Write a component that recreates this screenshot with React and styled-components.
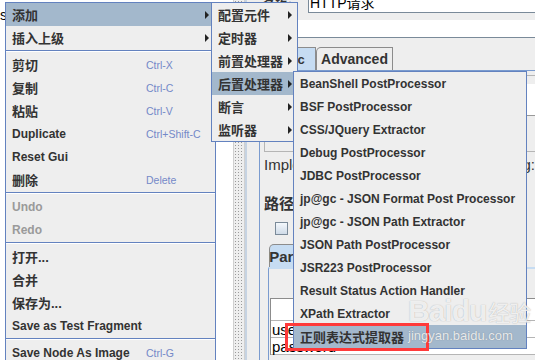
import React from 'react'
import styled, { createGlobalStyle } from 'styled-components'

const UI_FONT = `"Liberation Sans", "Noto Sans CJK SC", sans-serif`
const HAS_CJK = /[\u4e00-\u9fff]/

const GlobalStyle = createGlobalStyle`
  html, body {
    margin: 0;
    padding: 0;
    background: #eeeeee;
  }
  body {
    font-family: ${UI_FONT};
    font-size: 12px;
    color: #333333;
  }
`

const Screen = styled.div`
  position: relative;
  width: 535px;
  height: 360px;
  overflow: hidden;
  display: flex;
  background: #eeeeee;
`

/* ---------- the JMeter window behind the popup ---------- */

const Tree = styled.div`
  flex: none;
  width: 233px;
  background: #ffffff;
  display: flex;
  flex-direction: column;
`

const TreeRow = styled.div`
  height: ${p => p.$h || 18}px;
  line-height: 18px;
  padding-left: ${p => p.$indent || 0}px;
  white-space: nowrap;
  color: #000;
  font-size: 14px;
`

const Splitter = styled.div`
  flex: none;
  width: 10px;
  background-color: #eeeeee;
  background-image: radial-gradient(#9a9a9a 0.7px, transparent 1px);
  background-size: 3px 3px;
  border-left: 1px solid #d0d0d0;
  border-right: 1px solid #d0d0d0;
`

const Editor = styled.div`
  flex: 1;
  min-width: 0;
  display: flex;
  flex-direction: column;
  padding-left: 12px;
  border-left: 2px solid #c6d3e2;
`

const FieldRow = styled.div`
  display: flex;
  align-items: flex-end;
  margin-top: ${p => p.$top || 0}px;
  height: ${p => p.$h}px;
`

const FieldLabel = styled.div`
  flex: none;
  width: ${p => p.$w}px;
  font-weight: bold;
  padding-left: 4px;
`

const TextField = styled.div`
  flex: 1;
  height: 100%;
  box-sizing: border-box;
  background: #ffffff;
  border-left: ${p => (p.$flat ? 'none' : '1px solid #7a8a99')};
  border-bottom: 1px solid #7a8a99;
  font-size: 14px;
  color: #000;
  padding: 0 0 2px 1px;
  display: flex;
  align-items: flex-end;
  line-height: 14px;
  white-space: nowrap;
`

const TabStrip = styled.div`
  display: flex;
  height: 23px;
  margin-top: ${p => p.$top || 0}px;
  margin-left: ${p => p.$left || 0}px;
`

const Tab = styled.div`
  flex: none;
  width: ${p => p.$w}px;
  display: flex;
  align-items: center;
  justify-content: center;
  font-weight: bold;
  font-size: ${p => p.$size || 13}px;
  color: #333;
  border: 1px solid #8c8c8c;
  border-bottom: none;
  background: ${p => (p.$selected ? '#c6dcf2' : '#eeeeee')};
  border-top-left-radius: 5px;
`

const TabPanel = styled.div`
  flex: 1;
  border-top: 1px solid #7a9bcf;
  border-left: 1px solid #7a9bcf;
  display: flex;
  flex-direction: column;
`

const GroupBox = styled.div`
  height: 67px;
  margin: 4px 0 0 4px;
  border: 1px solid #b5b5b5;
  border-right: none;
  display: flex;
  align-items: flex-start;
  padding-top: 8px;
`

const Blank = styled.div`
  margin-left: auto;
  width: 120px;
  height: 31px;
  background: #ffffff;
  border-bottom: 1px solid #999;
`

const FormRow = styled.div`
  height: 22px;
  margin-top: ${p => p.$top || 0}px;
  display: flex;
  align-items: center;
  padding-left: 4px;
  gap: 6px;
  white-space: nowrap;
  color: #333;
  font-weight: ${p => (p.$bold ? 'bold' : 'normal')};
  font-size: 15px;
`

const Spacer = styled.div`
  flex: 1;
`

const CheckBox = styled.span`
  flex: none;
  width: 11px;
  height: 11px;
  margin-left: 11px;
  border: 1px solid #7a8a99;
  background: linear-gradient(#f4f8fc, #cfdbe8);
`

const ParamPanel = styled.div`
  flex: 1;
  margin-left: 8px;
  border-top: 2px solid #c6dcf2;
  border-left: 1px solid #7a9bcf;
  display: flex;
  flex-direction: column;
  padding-top: 29px;
`

const Table = styled.div`
  margin-left: 1px;
  border-top: 1px solid #8c8c8c;
  border-left: 1px solid #8c8c8c;
  background: #ffffff;
  display: flex;
  flex-direction: column;
`

const TableRow = styled.div`
  height: ${p => p.$h || 16}px;
  border-bottom: 1px solid #b5b5b5;
  display: flex;
  align-items: center;
  padding-left: 1px;
  font-size: 15px;
  color: #000;
`

/* ---------- popup menus ---------- */

const Popup = styled.div`
  position: absolute;
  left: ${p => p.$x}px;
  top: ${p => p.$y}px;
  width: ${p => p.$w}px;
  box-sizing: border-box;
  background: #eeeeee;
  border: 1px solid #6382bf;
  display: flex;
  flex-direction: column;
`

const Item = styled.div`
  height: 23px;
  display: flex;
  align-items: center;
  padding: 0 ${p => p.$pr || 6}px 0 6px;
  font-weight: bold;
  white-space: nowrap;
  color: ${p => (p.$disabled ? '#9a9a9a' : '#333333')};
  background: ${p => (p.$active ? '#a3b8cc' : 'transparent')};
`

const ItemLabel = styled.span`
  flex: 1;
  font-size: ${p => (p.$cjk ? 13 : 12)}px;
`

const Shortcut = styled.span`
  flex: none;
  width: 63px;
  font-weight: normal;
  font-size: 10.5px;
  color: #7489c8;
`

const Arrow = styled.span`
  flex: none;
  width: 0;
  height: 0;
  border-left: 4px solid #222;
  border-top: 4px solid transparent;
  border-bottom: 4px solid transparent;
`

const Separator = styled.div`
  height: 4px;
  display: flex;
  flex-direction: column;
  justify-content: center;

  &::before {
    content: '';
    height: 1px;
    background: #6382bf;
  }
  &::after {
    content: '';
    height: 1px;
    background: #ffffff;
  }
`

const Highlight = styled.div`
  position: absolute;
  left: 285px;
  top: 323px;
  width: 144px;
  height: 28px;
  box-sizing: border-box;
  border: 3px solid #ff3a3a;
`

const Watermark = styled.div`
  position: absolute;
  left: 408px;
  top: 296px;
  color: rgba(255, 255, 255, 0.82);
  text-shadow: 0 0 1px rgba(90, 90, 90, 0.5);
  font-family: ${UI_FONT};
  line-height: 1;
  pointer-events: none;
`

const MarkLogo = styled.div`
  font-size: 30px;
  font-weight: bold;
  letter-spacing: -1px;

  small {
    font-size: 22px;
    font-weight: normal;
    margin-left: 2px;
  }
`

const MarkUrl = styled.div`
  font-size: 13px;
  margin-top: 3px;
`

const mainItems = [
  { label: '添加', sub: true, active: true },
  { label: '插入上级', sub: true },
  'sep',
  { label: '剪切', key: 'Ctrl-X' },
  { label: '复制', key: 'Ctrl-C' },
  { label: '粘贴', key: 'Ctrl-V' },
  { label: 'Duplicate', key: 'Ctrl+Shift-C' },
  { label: 'Reset Gui' },
  { label: '删除', key: 'Delete' },
  'sep',
  { label: 'Undo', disabled: true },
  { label: 'Redo', disabled: true },
  'sep',
  { label: '打开...' },
  { label: '合并' },
  { label: '保存为...' },
  { label: 'Save as Test Fragment' },
  'sep',
  { label: 'Save Node As Image', key: 'Ctrl-G' },
]

const addItems = [
  { label: '配置元件', sub: true },
  { label: '定时器', sub: true },
  { label: '前置处理器', sub: true },
  { label: '后置处理器', sub: true, active: true },
  { label: '断言', sub: true },
  { label: '监听器', sub: true },
]

const postItems = [
  { label: 'BeanShell PostProcessor' },
  { label: 'BSF PostProcessor' },
  { label: 'CSS/JQuery Extractor' },
  { label: 'Debug PostProcessor' },
  { label: 'JDBC PostProcessor' },
  { label: 'jp@gc - JSON Format Post Processor' },
  { label: 'jp@gc - JSON Path Extractor' },
  { label: 'JSON Path PostProcessor' },
  { label: 'JSR223 PostProcessor' },
  { label: 'Result Status Action Handler' },
  { label: 'XPath Extractor' },
  { label: '正则表达式提取器', active: true },
]

const Menu = ({ x, y, w, items, pr }) =>
  <Popup $x={x} $y={y} $w={w}>
    {items.map((it, i) =>
      it === 'sep'
        ? <Separator key={i}/>
        : <Item key={i} $active={it.active} $disabled={it.disabled} $pr={pr}>
            <ItemLabel $cjk={HAS_CJK.test(it.label)}>{it.label}</ItemLabel>
            {it.key ? <Shortcut>{it.key}</Shortcut> : null}
            {it.sub ? <Arrow/> : null}
          </Item>
    )}
  </Popup>

const App = () =>
  <Screen>
    <GlobalStyle/>

    <Tree>
      <TreeRow $h={6}/>
      <TreeRow>s</TreeRow>
      <TreeRow $indent={20}>HTTP Cookie 管理器</TreeRow>
      <TreeRow $indent={20}>用户定义的变量</TreeRow>
    </Tree>
    <Splitter/>

    <Editor>
      <FieldRow $top={-9} $h={22}>
        <FieldLabel $w={45}>名称：</FieldLabel>
        <TextField>HTTP请求</TextField>
      </FieldRow>
      <FieldRow $top={7} $h={18}>
        <FieldLabel $w={23}>注释：</FieldLabel>
        <TextField $flat/>
      </FieldRow>
      <TabStrip $top={9}>
        <Tab $w={55} $selected>Basic</Tab>
        <Tab $w={75} $size={14}>Advanced</Tab>
      </TabStrip>
      <TabPanel>
        <GroupBox>
          <Blank/>
        </GroupBox>
        <FormRow $top={1}>
          Implementation:
          <Spacer/>
          Content encoding:
        </FormRow>
        <FormRow $top={16} $bold>路径：</FormRow>
        <FormRow $top={4}>
          <CheckBox/>
          自动重定向
        </FormRow>
        <TabStrip $top={5} $left={9}>
          <Tab $w={80} $size={15} $selected>Parameters</Tab>
        </TabStrip>
        <ParamPanel>
          <Table>
            <TableRow $h={21}/>
            <TableRow>username</TableRow>
            <TableRow>password</TableRow>
          </Table>
        </ParamPanel>
      </TabPanel>
    </Editor>

    <Menu x={5} y={2} w={211} items={mainItems}/>
    <Menu x={211} y={2} w={87} items={addItems} pr={5}/>
    <Menu x={293} y={71} w={234} items={postItems}/>

    <Highlight/>
    <Watermark>
      <MarkLogo>Baidu<small>经验</small></MarkLogo>
      <MarkUrl>jingyan.baidu.com</MarkUrl>
    </Watermark>
  </Screen>

export default App
